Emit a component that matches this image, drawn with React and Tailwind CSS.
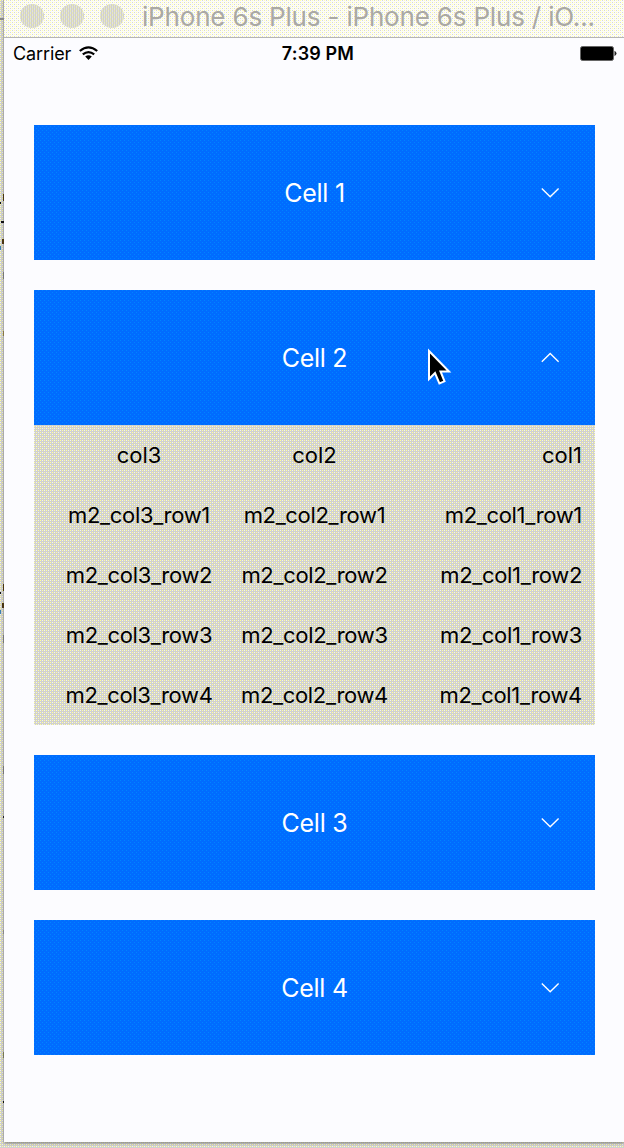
import React from "react";

const cells = [
  { title: "Cell 1" },
  { title: "Cell 2", open: true },
  { title: "Cell 3" },
  { title: "Cell 4" },
];
const rows = [
  ["col3", "col2", "col1"],
  ...[1, 2, 3, 4].map((r) => [3, 2, 1].map((c) => `m2_col${c}_row${r}`)),
];

// Fine two-tone stipples, one 4px tile each, all aligned to the viewport
const lightStipple =
  "bg-fixed bg-[#fcfcf8] bg-[image:conic-gradient(at_1px_1px,transparent_75%,#ffffaa_0),conic-gradient(at_1px_1px,transparent_75%,#ffffaa_0),conic-gradient(at_1px_1px,transparent_75%,#d4d4da_0),conic-gradient(at_1px_1px,transparent_75%,#d4d4da_0)] bg-[size:4px_4px] bg-[position:0_0,2px_2px,2px_0,0_2px]";
const darkStipple =
  "bg-fixed bg-[#d0d0ce] bg-[image:conic-gradient(at_1px_1px,transparent_75%,#ffff99_0),conic-gradient(at_1px_1px,transparent_75%,#ffff99_0),conic-gradient(at_1px_1px,transparent_75%,#f4f4ee_0),conic-gradient(at_1px_1px,transparent_75%,#f4f4ee_0)] bg-[size:4px_4px] bg-[position:0_0,2px_2px,2px_0,0_2px]";
const blueStipple =
  "bg-fixed bg-[#006cff] bg-[image:conic-gradient(at_1px_1px,transparent_75%,#0084ff_0),conic-gradient(at_1px_1px,transparent_75%,#0084ff_0)] bg-[size:4px_4px] bg-[position:0_0,2px_2px]";

// Slivers of the window behind, seen along the left edge: x, y, width, height, colour
const slivers = [
  [0, 18, 4, 2, "#888"], [3, 194, 1, 7, "#4a3510"], [0, 202, 1, 2, "#111"],
  [1, 221, 3, 2, "#111"], [2, 239, 2, 5, "#4a3510"], [0, 246, 1, 4, "#3c80b0"],
  [3, 272, 1, 7, "#777"], [3, 331, 1, 5, "#887744"], [3, 584, 1, 7, "#4a3510"],
  [0, 592, 1, 2, "#111"], [2, 603, 2, 5, "#4a3510"], [0, 610, 1, 4, "#3c80b0"],
  [3, 635, 1, 8, "#777"], [3, 766, 1, 8, "#777"], [3, 816, 1, 2, "#222"],
  [3, 930, 1, 4, "#888"], [3, 1052, 1, 6, "#777755"], [3, 1101, 1, 2, "#111"],
];

function Chevron({ open }) {
  return (
    <svg className="absolute left-[507px] top-[62px] h-[11px] w-[19px]" viewBox="0 0 19 11" fill="none" stroke="white" strokeWidth="1.4">
      <path d={open ? "M.8 9.7 9.2 1.5 17.6 9.7" : "M.8 1.5 9.2 9.7 17.6 1.5"} />
    </svg>
  );
}

function Cell({ title, open }) {
  return (
    <section>
      <div className={`relative flex h-[135px] items-center justify-center text-[25px] tracking-[-0.25px] text-white ${blueStipple}`}>
        <span className="pt-[3px]">{title}</span>
        <Chevron open={open} />
      </div>
      {open && (
        <div className={`text-[22px] text-black ${darkStipple}`}>
          {rows.map((r, i) => (
            <div key={r[0]} className={`grid h-[60px] grid-cols-[175px_175px_198px] items-center whitespace-nowrap pr-[13px] ${i ? "tracking-[-0.33px]" : ""}`}>
              <span className="flex justify-center pl-[35px]"><b className="flex w-0 justify-center font-normal">{r[0]}</b></span>
              <span className="flex justify-center pl-[36px]"><b className="flex w-0 justify-center font-normal">{r[1]}</b></span>
              <span className="text-right">{r[2]}</span>
            </div>
          ))}
        </div>
      )}
    </section>
  );
}

export default function App() {
  return (
    <div className={`relative flex h-[1148px] w-[624px] flex-col overflow-hidden pl-1 font-['Inter',sans-serif] ${darkStipple}`}>
      <main className="h-[1142px] bg-[#fcfcff] shadow-[0_1px_3px_#777]">
        <header className={`flex h-[38px] items-center border-b border-[#b5b5b5] pl-4 ${lightStipple}`}>
          <div className="flex gap-4 pb-1.5">
            <i className={`size-6 rounded-full ${darkStipple}`} />
            <i className={`size-6 rounded-full ${darkStipple}`} />
            <i className={`size-6 rounded-full ${darkStipple}`} />
          </div>
          <span className="ml-[18px] whitespace-nowrap pb-1 text-[26px] tracking-[-0.18px] text-[#aaa9a4]">iPhone 6s Plus - iPhone 6s Plus / iO...</span>
        </header>
        <div className="relative flex h-[87px] items-start justify-center pt-1 text-[18px] leading-6 text-black">
          <div className="absolute left-[9px] top-1 flex items-center gap-2">
            <span className="tracking-[-0.1px]">Carrier</span>
            <svg className="mb-px h-[15px] w-[19px]" viewBox="0 0 19 15" fill="none" stroke="black" strokeWidth="2.2">
              <path d="M.8 5Q9.5-2.4 18.2 5M3.8 8.4Q9.5 3.7 15.2 8.4" />
              <path d="M6.2 10.6Q9.5 8 12.8 10.6L9.5 14Z" fill="black" stroke="none" />
            </svg>
          </div>
          <span className="pl-2 font-semibold tracking-[0.15px]">7:39 PM</span>
          <svg className="absolute left-[576px] top-2 h-[15px] w-[38px]" viewBox="0 0 38 15">
            <rect x=".5" y=".5" width="33" height="14" rx="2" stroke="#666" />
            <path d="M34.5 4.8Q38.5 7.5 34.5 10.2Z" fill="#222" />
          </svg>
        </div>
        <div className="flex w-[591px] flex-col gap-[30px] pl-[30px]">
          {cells.map((c) => <Cell key={c.title} {...c} />)}
        </div>
      </main>
      <svg className="absolute left-0 top-0 h-[1148px] w-1" viewBox="0 0 4 1148" shapeRendering="crispEdges">
        <rect x="3" width="1" height="1142" fill="#aaa" />
        {slivers.map(([x, y, w, h, fill]) => <rect key={y} x={x} y={y} width={w} height={h} fill={fill} />)}
      </svg>
      <svg className="absolute left-[426px] top-[347px] h-[40px] w-[27px]" viewBox="0 0 27 40">
        <path d="M3 4V32L9 26L13.4 36.5L18.5 34.3L14.5 24.5H23Z" fill="black" stroke="white" strokeWidth="2" />
      </svg>
    </div>
  );
}
